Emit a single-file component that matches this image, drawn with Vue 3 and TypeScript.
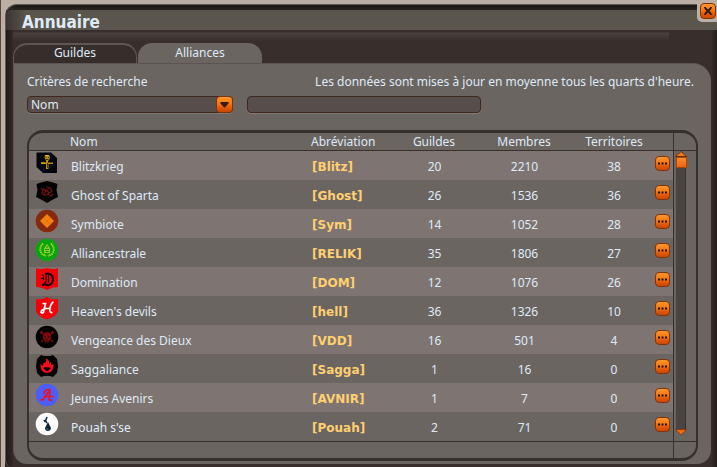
<script setup lang="ts">
import { ref } from 'vue'

interface Alliance {
  name: string
  tag: string
  guilds: number
  members: number
  territories: number
  emblem: string
}

const tabs = ['Guildes', 'Alliances']
const activeTab = ref('Alliances')
const criterion = ref('Nom')
const query = ref('')

const alliances: Alliance[] = [
  { name: 'Blitzkrieg', tag: '[Blitz]', guilds: 20, members: 2210, territories: 38, emblem: 'sword' },
  { name: 'Ghost of Sparta', tag: '[Ghost]', guilds: 26, members: 1536, territories: 36, emblem: 'ghost' },
  { name: 'Symbiote', tag: '[Sym]', guilds: 14, members: 1052, territories: 28, emblem: 'diamond' },
  { name: 'Alliancestrale', tag: '[RELIK]', guilds: 35, members: 1806, territories: 27, emblem: 'laurel' },
  { name: 'Domination', tag: '[DOM]', guilds: 12, members: 1076, territories: 26, emblem: 'gothic' },
  { name: "Heaven's devils", tag: '[hell]', guilds: 36, members: 1326, territories: 10, emblem: 'script' },
  { name: 'Vengeance des Dieux', tag: '[VDD]', guilds: 16, members: 501, territories: 4, emblem: 'skull' },
  { name: 'Saggaliance', tag: '[Sagga]', guilds: 1, members: 16, territories: 0, emblem: 'flame' },
  { name: 'Jeunes Avenirs', tag: '[AVNIR]', guilds: 1, members: 7, territories: 0, emblem: 'swash' },
  { name: "Pouah s'se", tag: '[Pouah]', guilds: 2, members: 71, territories: 0, emblem: 'drop' },
]
</script>

<template>
  <div class="frame">
    <div class="close-corner">
      <button class="orange close" type="button" aria-label="Fermer">
        <svg viewBox="0 0 16 16" width="16" height="16">
          <path d="M5 5L11 11M11 5L5 11" stroke="#3a1c08" stroke-width="2.2" />
          <path d="M4 4.5H6M10 4.5H12M4 11.5H6M10 11.5H12" stroke="#3a1c08" />
        </svg>
      </button>
    </div>
    <main class="window">
      <header class="titlebar"><h1>Annuaire</h1></header>
      <nav class="tabs" role="tablist">
        <button
          v-for="tab in tabs"
          :key="tab"
          type="button"
          role="tab"
          class="tab"
          :class="{ active: tab === activeTab }"
          :aria-selected="tab === activeTab"
          @click="activeTab = tab"
        >{{ tab }}</button>
      </nav>
      <section class="panel">
        <div class="captions">
          <label for="criterion">Critères de recherche</label>
          <label for="query">Les données sont mises à jour en moyenne tous les quarts d'heure.</label>
        </div>
        <div class="search">
          <div class="picker">
            <select id="criterion" v-model="criterion" class="field">
              <option>Nom</option>
            </select>
            <span class="orange arrow">
              <svg viewBox="0 0 17 17" width="17" height="17"><path d="M4.500 6H12.500V7.500L9 11.500H8L4.500 7.500Z" fill="#3a1c08" /></svg>
            </span>
          </div>
          <input id="query" v-model="query" class="field query" type="text" />
        </div>
        <div class="list">
          <table>
            <colgroup>
              <col class="c-icon" /><col /><col class="c-tag" /><col class="c-num" />
              <col class="c-num" /><col class="c-last" /><col class="c-more" />
            </colgroup>
            <thead>
              <tr>
                <th></th>
                <th>Nom</th>
                <th>Abréviation</th>
                <th class="num">Guildes</th>
                <th class="num">Membres</th>
                <th class="num last">Territoires</th>
                <th></th>
              </tr>
            </thead>
            <tbody>
              <tr v-for="a in alliances" :key="a.name">
                <td class="icon-cell">
                  <svg class="emblem" viewBox="0 0 24 24" width="24" height="24" aria-hidden="true">
                    <template v-if="a.emblem === 'sword'">
                      <path d="M1.500 1.500H16L22 7V22H8L1.500 16Z" fill="#03060b" />
                      <path d="M10 4H14L15 6L14 9.500H13V11.500H18V13H13.500V18H11V13H6V11.500H11V9.500L9.500 7Z" fill="#b88a0c" />
                      <path d="M10.500 6.500H11.500M13 6.500H14M10.500 8.500H13.500M12.500 12V17" stroke="#4a3504" />
                      <path d="M10 4.500H13.500M6 12H10" stroke="#f0b41a" />
                    </template>
                    <template v-else-if="a.emblem === 'ghost'">
                      <path d="M6 2.500L12 1L18 2.500L22.500 4L21.500 10L23 17L17 20L12 23L7 20L1 17L2.500 10L1.500 4Z" fill="#030202" />
                      <path d="M6 8L8 10L7 13L10 15L13 14L16 16L18 14M8 9L11 11L9 13M12 7L15 8L17 11L14 13L11 10L14 9" fill="none" stroke="#71100f" stroke-width="1.3" />
                    </template>
                    <template v-else-if="a.emblem === 'diamond'">
                      <circle cx="12" cy="12" r="11.300" fill="#85280b" />
                      <path d="M12 5L19 12L12 19L5 12Z" fill="#f5820c" />
                      <path d="M8.500 8.500L15.500 15.500M15.500 8.500L8.500 15.500" stroke="#d96b08" stroke-width=".7" />
                    </template>
                    <template v-else-if="a.emblem === 'laurel'">
                      <circle cx="12" cy="12" r="11.300" fill="#08a50f" />
                      <path d="M8 5.500Q3 11 7 16L11 18M16 5.500Q21 11 17 16L13 18" fill="none" stroke="#a9d831" stroke-width="1.900" stroke-dasharray="1.500 .7" />
                      <path d="M9 15V10.500L12 6L15 10.500V15Z" fill="#8fd02b" />
                      <path d="M10 11.500H14M10.500 13.500H13.500M12 8V10" stroke="#178c10" />
                    </template>
                    <template v-else-if="a.emblem === 'gothic'">
                      <path d="M1 1Q4 3 12 1Q20 3 23 1V20Q17 20 12 23Q7 20 1 20Z" fill="#f60008" />
                      <path d="M10 6.500Q18 6 18 12Q18 17 13 18.500Q10 16.500 7 18.500" fill="none" stroke="#160304" stroke-width="2" />
                      <path d="M11 6V15L8 17.500M7.500 7.500L8.500 9V13M6 11.500H9M13.500 8V16" fill="none" stroke="#160304" stroke-width="1.200" />
                    </template>
                    <template v-else-if="a.emblem === 'script'">
                      <path d="M1 3Q8 4 12 1Q16 4 23 3V15Q21 21 12 23.500Q3 21 1 15Z" fill="#f60008" />
                      <path d="M7.500 7.500H10.500L8.500 16Q7.500 18 6 16.500Q6 13.500 11 12.500H15.500M18.500 6Q16 7 15 12Q14 17 17.500 16.500" fill="none" stroke="#fff" stroke-width="1.700" />
                    </template>
                    <template v-else-if="a.emblem === 'skull'">
                      <circle cx="12" cy="12" r="11.300" fill="#030202" />
                      <path d="M8 9Q12 5 16 9V14L14 16V18H10V16L8 14Z" fill="#7c090b" />
                      <path d="M6 6L8 9M18 6L16 9M5 8H7M17 8H19M6 17L8 15M18 17L16 15" stroke="#7c090b" stroke-width="1.500" />
                      <path d="M9.500 12H11M13 12H14.500M12 14V15M11 16V18M13 16V18" stroke="#120202" />
                    </template>
                    <template v-else-if="a.emblem === 'flame'">
                      <path d="M6 1L9 2H15L18 1L22 5L23 12L22 19L18 23L15 22H9L6 23L2 19L1 12L2 5Z" fill="#030202" />
                      <path d="M11 4Q15 6 14 10L16 8V11L18.500 10Q19 18.500 12 19Q5 18.500 5.500 10L8 12Q8 8.500 10 8.500Q12 7 11 4Z" fill="#f60c17" />
                      <path d="M12 17.500L8.500 14.500Q9 12 12 13.500Q15 12 15.500 14.500Z" fill="#080202" />
                    </template>
                    <template v-else-if="a.emblem === 'swash'">
                      <circle cx="12" cy="12" r="11.300" fill="#4c5ef7" />
                      <path d="M6 16Q6.500 18.500 9 15.500L15 6.500L14 16.500Q15 18 17 16.500M9 11Q9 6.500 15 6.500M8.500 13.500H18.500" fill="none" stroke="#ed101f" stroke-width="1.700" />
                    </template>
                    <template v-else>
                      <circle cx="12" cy="12" r="11.300" fill="#fff" />
                      <path d="M13 10L16 16Q15.500 19 13 19Q10 19 10 16Z" fill="#0b2438" />
                      <path d="M12 5L10.500 9L12 11M9 8L10 10" fill="none" stroke="#0b2438" stroke-width="1.500" />
                      <path d="M11.500 16Q12 18 13.500 17.500" fill="none" stroke="#54717d" />
                    </template>
                  </svg>
                </td>
                <td>{{ a.name }}</td>
                <td class="tag">{{ a.tag }}</td>
                <td class="num">{{ a.guilds }}</td>
                <td class="num">{{ a.members }}</td>
                <td class="num last">{{ a.territories }}</td>
                <td class="more-cell">
                  <button class="orange more" type="button" :aria-label="'Options : ' + a.name">
                    <svg viewBox="0 0 15 15" width="15" height="15"><path d="M3 6.500H5V8.500H3ZM6.500 6.500H8.500V8.500H6.500ZM10 6.500H12V8.500H10Z" fill="#241005" /></svg>
                  </button>
                </td>
              </tr>
            </tbody>
          </table>
          <div class="scroll">
            <div class="scroll-head"></div>
            <div class="scroll-body">
              <svg viewBox="0 0 12 6" width="12" height="6"><path d="M6 .5L11.500 5.500H.5Z" fill="#f57a16" stroke="#6b2d0a" /></svg>
              <div class="track"><div class="thumb"></div></div>
              <svg viewBox="0 0 12 7" width="12" height="7"><path d="M.5 .5H11.500L6 6Z" fill="#f0690f" stroke="#8d3b0d" /></svg>
            </div>
          </div>
          <div class="foot"></div>
          <div class="foot foot-end"></div>
        </div>
      </section>
    </main>
  </div>
</template>

<style>
body {
  margin: 0;
  background: #2a2420;
}
</style>

<style scoped>
* {
  box-sizing: border-box;
}
.frame {
  position: relative;
  padding: 4px 0 0 5px;
  background: linear-gradient(90deg, #55482f 1px, #bcafa5 1px, #bcafa5 5px, #2a2420 5px);
  font-family: "Noto Sans", "DejaVu Sans", sans-serif;
  font-size: 12px;
  line-height: 16px;
  color: #dfeaf7;
}
.frame::before {
  content: "";
  position: absolute;
  top: 0;
  left: 1px;
  right: 0;
  height: 16px;
  background: #bcafa5;
}
.window {
  position: relative;
  padding: 6px 6px 4px 7px;
  border-left: 1px solid #625a52;
  border-top: 1px solid #625a52;
  border-radius: 12px 0 0 8px;
  background:
    linear-gradient(90deg, #1d1916, #2f2926 6px, transparent 8px),
    linear-gradient(270deg, #241e1c, transparent 6px),
    linear-gradient(#1d1916, #2b2522 5px, #382e2c 6px);
  background-color: #382e2c;
}
.titlebar {
  height: 20px;
  margin: -1px -6px 0 -7px;
  padding-left: 16px;
  background: linear-gradient(90deg, #3b3531, #5a554d 20px);
}
h1 {
  margin: 0;
  font-family: "DejaVu Sans Condensed", "DejaVu Sans", sans-serif;
  font-stretch: condensed;
  font-size: 17px;
  line-height: 24px;
  font-weight: bold;
}
.tabs {
  display: flex;
  gap: 1px;
  height: 33px;
  padding-top: 13px;
  background: linear-gradient(#382e2c 2px, #4a403c 3px, #382e2c 11px) 0 0 / calc(100% - 42px) 100% no-repeat;
}
.tab {
  width: 124px;
  height: 20px;
  padding: 0 0 2px;
  border: 1px solid #5e5651;
  border-width: 2px 1px 0;
  border-radius: 14px 14px 0 0;
  background: #362e2b;
  color: inherit;
  font: inherit;
}
.tab.active {
  background: #6b6562;
  border-color: #6b6562;
}
.panel {
  padding: 10px 13px 3px 13px;
  border: 1px solid #5b5450;
  border-width: 1px 0 0 1px;
  border-radius: 0 18px 14px 14px;
  background: #6b6562;
}
.captions {
  display: flex;
  justify-content: space-between;
  gap: 16px;
  padding: 0 4px 0 0;
  white-space: nowrap;
}
.search {
  display: flex;
  gap: 14px;
  padding-top: 6px;
}
.picker {
  position: relative;
  width: 206px;
}
.field {
  display: block;
  width: 100%;
  height: 17px;
  padding: 0 3px;
  border: 1px solid #40291c;
  border-radius: 4px;
  background: #574d4a;
  box-shadow: 0 1px 0 #807873;
  appearance: none;
  color: inherit;
  font: inherit;
}
.query {
  width: 234px;
}
.orange {
  display: block;
  padding: 0;
  border: 1px solid #823407;
  border-radius: 4px;
  background: linear-gradient(#ff9630, #f4780f 45%, #df5508 75%, #c74906);
}
.orange svg {
  display: block;
  margin: -1px;
}
.arrow {
  position: absolute;
  top: 0;
  right: 0;
  width: 17px;
  height: 17px;
  pointer-events: none;
}
.list {
  display: grid;
  grid-template-columns: 1fr 23px;
  margin-top: 17px;
  border: 2px solid #37302c;
  border-width: 3px 2px;
  border-radius: 16px;
}
table {
  width: 100%;
  table-layout: fixed;
  border-collapse: separate;
  border-spacing: 0;
}
.c-icon { width: 41px; }
.c-tag { width: 78px; }
.c-num { width: 90px; }
.c-last { width: 86px; }
.c-more { width: 18px; }
th,
td {
  padding: 0;
  text-align: left;
  white-space: nowrap;
}
th {
  height: 18px;
  border-bottom: 1px solid #37302c;
  font-weight: normal;
}
td {
  height: 29px;
  padding: 2px 0 0 1px;
}
tbody tr:nth-child(odd) {
  background: #7e7572;
}
.num {
  text-align: center;
}
.last {
  padding-left: 4px;
}
.tag {
  color: #ffcf70;
  font-family: "DejaVu Sans", sans-serif;
  font-weight: bold;
}
.icon-cell {
  padding: 0 0 0 6px;
  vertical-align: top;
}
.emblem {
  display: block;
}
.more-cell {
  padding: 5px 3px 0 0;
  vertical-align: top;
}
.more {
  width: 15px;
  height: 15px;
}
.scroll {
  display: flex;
  flex-direction: column;
  border-left: 1px solid #37302c;
}
.scroll-head {
  height: 18px;
  border-bottom: 1px solid #37302c;
}
.scroll-body {
  display: flex;
  flex: 1;
  flex-direction: column;
  width: 14px;
  padding-bottom: 5px;
  align-items: center;
}
.track {
  flex: 1;
  width: 10px;
  border-right: 1px solid #352e2b;
  background: #494441;
}
.thumb {
  width: 11px;
  height: 11px;
  border: 1px solid #a5480f;
  background: linear-gradient(#ff8a2c, #ef6410);
}
.foot {
  height: 17px;
  border-top: 1px solid #37302c;
}
.foot-end {
  border-left: 1px solid #37302c;
}
.close-corner {
  position: absolute;
  z-index: 1;
  top: 0;
  right: 0;
  padding: 3px 1px 3px 3px;
  border-radius: 0 0 0 5px;
  background: #bcafa5;
}
.close {
  width: 16px;
  height: 16px;
}
</style>
